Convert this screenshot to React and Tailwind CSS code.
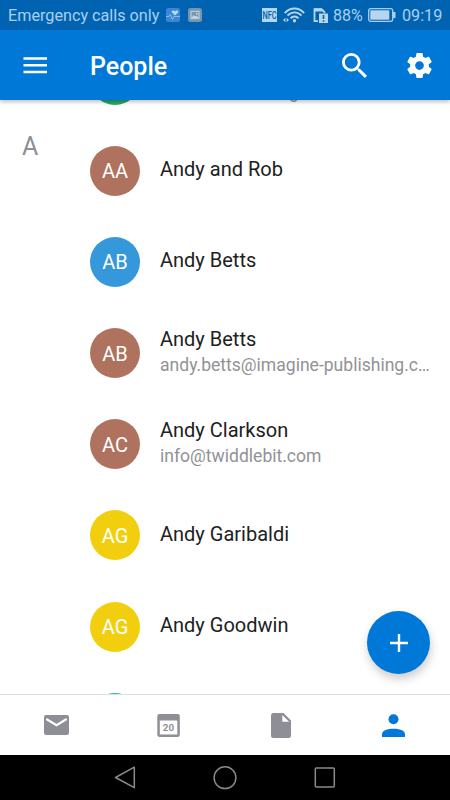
import { useState } from "react"

const CONTACTS = [
  { id: 1, initials: "",   name: "",               email: "service.marketing",                 color: "bg-[#2aa866]" },
  { id: 2, initials: "AA", name: "Andy and Rob",   color: "bg-[#ae725e]", section: "A" },
  { id: 3, initials: "AB", name: "Andy Betts",     color: "bg-[#3498db]" },
  { id: 4, initials: "AB", name: "Andy Betts",     email: "andy.betts@imagine-publishing.co.uk", color: "bg-[#ae725e]" },
  { id: 5, initials: "AC", name: "Andy Clarkson",  email: "info@twiddlebit.com",               color: "bg-[#ae725e]" },
  { id: 6, initials: "AG", name: "Andy Garibaldi", color: "bg-[#f1cf0f]" },
  { id: 7, initials: "AG", name: "Andy Goodwin",   color: "bg-[#f1cf0f]" },
  { id: 8, initials: "",   name: "",               color: "bg-[#2fbd78]" },
]

const TABS = [
  { id: "mail",     label: "Mail",     Icon: MailIcon },
  { id: "calendar", label: "Calendar", Icon: CalendarIcon },
  { id: "files",    label: "Files",    Icon: FileIcon },
  { id: "people",   label: "People",   Icon: PersonIcon },
]

export default function App() {
  const [tab, setTab] = useState("people")

  return (
    <div className="flex flex-col w-[450px] h-[800px] overflow-hidden bg-white font-['Roboto','Liberation_Sans',sans-serif]">
      <StatusBar />
      <AppBar />

      <main className="relative flex-1 min-h-0">
        <ContactList />
        <button
          aria-label="Add contact"
          className="absolute left-[367px] top-[511px] w-[63px] h-[63px] rounded-full bg-[#0078d7] flex items-center justify-center shadow-[1px_5px_10px_rgba(0,0,0,0.2)]"
        >
          <svg viewBox="0 0 18 18" className="w-[18px] h-[18px]" stroke="#fff" strokeWidth="2.4">
            <path d="M9 0v18M0 9h18" />
          </svg>
        </button>
      </main>

      {/* Bottom tabs */}
      <nav className="grid grid-cols-4 h-[61px] shrink-0 border-t border-[#dedede] bg-white">
        {TABS.map(({ id, label, Icon }) => (
          <button
            key={id}
            aria-label={label}
            onClick={() => setTab(id)}
            className={`flex items-center justify-center ${tab === id ? "text-[#0078d7]" : "text-[#8e8e96]"}`}
          >
            <Icon />
          </button>
        ))}
      </nav>

      <SystemNav />
    </div>
  )
}

function StatusBar() {
  return (
    <header className="flex items-center h-[30px] shrink-0 pl-2 pr-2 bg-[#0063b1] text-[#a9cff0] text-[16.500px] leading-[30px]">
      <span className="pt-[2px] w-[158px] shrink-0 whitespace-nowrap text-[16.200px]">Emergency calls only</span>

      {/* Notifications */}
      <svg viewBox="0 0 14 14" className="w-[14px] h-[14px] shrink-0">
        <rect width="14" height="14" rx="2.5" fill="#3c87d3" />
        <path d="M9 7.400 5.800 4.300C5 2.700 7.700 1.600 9 3.400c1.300-1.800 4-.7 3.200.9z" fill="#b8dcf6" />
        <path d="M0 8.500h3l1.300-2 2.200 5 1.500-3h6" fill="none" stroke="#9bc8ee" strokeWidth=".8" />
      </svg>
      <svg viewBox="0 0 14 14" className="w-[14px] h-[14px] ml-2 shrink-0">
        <rect width="14" height="14" rx="2.5" fill="#7596ae" />
        <rect x="3" y="3.300" width="8" height="7.400" fill="none" stroke="#c7d9e5" />
        <path d="m3.500 10 2.300-3 1.500 1.500 1-1L10.500 10zM8 5h1.500v1.500H8z" fill="#c7d9e5" />
      </svg>

      <div className="flex-1" />

      {/* Radios */}
      <div className="flex items-center justify-center w-[15px] h-[14px] shrink-0 bg-[#b5d5f0] text-[#0063b1]">
        <span className="text-[9px] leading-[14px] font-medium scale-x-[.82] scale-y-[1.3]">NFC</span>
      </div>
      <svg viewBox="0 0 22 16" className="w-[22px] h-[16px] ml-[6px] shrink-0" fill="none" stroke="#b5d5f0" strokeWidth="1.900">
        <path d="M1.700 6.200c5.500-6.300 14-6.300 19.500 0M4.500 8.700c4-4.500 10-4.500 14 0M7.500 11.300c2.300-2.500 5.700-2.500 8 0" />
        <circle cx="11.500" cy="13.700" r="1.700" fill="#b5d5f0" stroke="none" />
        <path d="m0 13 2.400-2.300v4.600zM6 13l-2.400-2.300v4.600z" fill="#b5d5f0" stroke="none" />
      </svg>
      <svg viewBox="0 0 15 16" className="w-[15px] h-[16px] ml-2 shrink-0">
        <path d="M5 14.200H1.500v-12h7l3 3V6" fill="none" stroke="#b5d5f0" strokeWidth="1.800" />
        <path d="M1 1.500h7.800l3.200 3H1z" fill="#b5d5f0" />
        <path d="M6 6.500h9V16H6z" fill="#b5d5f0" />
        <path d="M10.500 8v4M10.500 13.200v1.600" stroke="#0063b1" strokeWidth="1.600" />
      </svg>
      <span className="pt-[2px] ml-[5px] w-[30px] shrink-0 whitespace-nowrap text-[16px]">88%</span>
      <svg viewBox="0 0 28 14" className="w-[28px] h-[14px] ml-[5px] shrink-0">
        <rect x=".7" y=".7" width="24" height="12.600" rx="2" fill="none" stroke="#a9cff0" strokeWidth="1.300" />
        <rect x="2.300" y="2.300" width="19" height="9.400" fill="#b5d5f0" />
        <path d="M25 4h2.500v6H25z" fill="#a9cff0" />
      </svg>
      <span className="pt-[2px] ml-[6px] w-[40px] shrink-0 whitespace-nowrap text-[16.200px]">09:19</span>
    </header>
  )
}

function AppBar() {
  return (
    <div className="relative z-10 flex items-center h-[70px] shrink-0 pl-[23px] pr-[18px] bg-[#0078d7] text-white shadow-[0_2px_4px_rgba(0,0,0,0.25)]">
      <button aria-label="Menu" className="mr-[43px]">
        <svg viewBox="0 0 24 17" className="w-[24px] h-[17px]" stroke="currentColor" strokeWidth="2.400">
          <path d="M.5 1.500h23.500M.5 8.300h23.500M.5 15h23.500" />
        </svg>
      </button>
      <h1 className="pt-[3px] text-[25px] leading-[30px] font-medium">People</h1>
      <div className="flex-1" />
      <button aria-label="Search">
        <svg viewBox="3 3 17.490 17.490" className="w-[25px] h-[25px]" fill="currentColor">
          <path d="M15.500 14h-.79l-.28-.27A6.471 6.471 0 0 0 16 9.500 6.500 6.500 0 1 0 9.500 16c1.610 0 3.090-.59 4.230-1.570l.27.28v.79l5 4.990L20.490 19l-4.990-5zm-6 0C7.010 14 5 11.990 5 9.500S7.010 5 9.500 5 14 7.010 14 9.500 11.990 14 9.500 14z" />
        </svg>
      </button>
      <button aria-label="Settings" className="ml-[40px]">
        <svg viewBox="2 2 20 20" className="w-[25px] h-[25px]" fill="currentColor">
          <path d="M19.430 12.980c.04-.32.07-.64.07-.98s-.03-.66-.07-.98l2.110-1.650c.19-.15.24-.42.12-.64l-2-3.460c-.12-.22-.39-.3-.61-.22l-2.490 1c-.52-.4-1.080-.73-1.690-.98l-.38-2.650C14.460 2.180 14.250 2 14 2h-4c-.25 0-.46.18-.49.42l-.38 2.650c-.61.25-1.170.59-1.690.98l-2.490-1c-.23-.09-.49 0-.61.22l-2 3.460c-.13.22-.07.49.12.64l2.110 1.650c-.04.32-.07.65-.07.98s.03.66.07.98l-2.110 1.650c-.19.15-.24.42-.12.64l2 3.460c.12.22.39.3.61.22l2.490-1c.52.4 1.080.73 1.690.98l.38 2.650c.03.24.24.42.49.42h4c.25 0 .46-.18.49-.42l.38-2.650c.61-.25 1.170-.59 1.690-.98l2.490 1c.23.09.49 0 .61-.22l2-3.460c.12-.22.07-.49-.12-.64l-2.110-1.650zM12 15.500c-1.930 0-3.500-1.570-3.500-3.500s1.570-3.500 3.500-3.500 3.500 1.570 3.500 3.500-1.570 3.500-3.500 3.500z" />
        </svg>
      </button>
    </div>
  )
}

// The list is scrolled, so the first and last rows are cut by the bars
function ContactList() {
  return (
    <div className="h-full overflow-hidden">
      <ul className="-mt-[66.100px]">
        {CONTACTS.map(contact => (
          <li key={contact.id} className="flex items-center h-[91.200px] pr-5">
            <div className="w-[90px] pl-[22px] pb-[47px] text-[25px] leading-[30px] text-[#8e8e93]">
              {contact.section}
            </div>
            <div className={`flex items-center justify-center w-[50px] h-[50px] shrink-0 rounded-full pt-px text-white text-[20px] ${contact.color}`}>
              {contact.initials}
            </div>
            <div className={`flex-1 min-w-0 ml-5 ${contact.email ? "-mt-px" : "-mt-[3px]"}`}>
              <p className="h-[26px] text-[20px] leading-[26px] text-[#212121] truncate">{contact.name}</p>
              {contact.email && (
                <p className="text-[17.560px] leading-[27px] text-[#929296] truncate">{contact.email}</p>
              )}
            </div>
          </li>
        ))}
      </ul>
    </div>
  )
}

function SystemNav() {
  return (
    <footer className="flex items-center justify-center h-[45px] shrink-0 bg-black text-[#8a8a8a]">
      <button aria-label="Back" className="flex justify-center w-[100px]">
        <svg viewBox="0 0 22 24" className="w-[22px] h-[24px]" fill="none" stroke="currentColor" strokeWidth="1.500" strokeLinejoin="round">
          <path d="M20.300 1.200v20.500L1.500 11.500z" />
        </svg>
      </button>
      <button aria-label="Home" className="flex justify-center w-[100px]">
        <svg viewBox="0 0 24 24" className="w-[24px] h-[24px]" fill="none" stroke="currentColor" strokeWidth="1.500">
          <circle cx="12" cy="11.700" r="10.900" />
        </svg>
      </button>
      <button aria-label="Recent apps" className="flex justify-center w-[100px]">
        <svg viewBox="0 0 22 22" className="w-[22px] h-[22px]" fill="none" stroke="currentColor" strokeWidth="1.500">
          <rect x="1.300" y="1" width="19" height="19" rx="1" />
        </svg>
      </button>
    </footer>
  )
}

function MailIcon() {
  return (
    <svg viewBox="0 0 25 20" className="w-[25px] h-[20px]">
      <rect width="25" height="20" rx="2.200" fill="currentColor" />
      <path d="m2.300 4 10.200 6.300L22.700 4" fill="none" stroke="#fff" strokeWidth="2.200" />
    </svg>
  )
}

function CalendarIcon() {
  return (
    <svg viewBox="0 0 23 23" className="w-[23px] h-[23px]">
      <path fillRule="evenodd" fill="currentColor" d="M2.500 0h18A2.300 2.300 0 0 1 22.800 2.500v18A2.300 2.300 0 0 1 20.500 23h-18A2.300 2.300 0 0 1 .3 20.500v-18A2.300 2.300 0 0 1 2.500 0zM2.800 6.500v14h17.500v-14z" />
      <text x="11.600" y="17" textAnchor="middle" fontSize="9.800" fontWeight="700" letterSpacing=".3" fill="currentColor">20</text>
    </svg>
  )
}

function FileIcon() {
  return (
    <svg viewBox="0 0 20 25" className="w-[20px] h-[25px]">
      <path fillRule="evenodd" fill="currentColor" d="M2.500 0H12.500L20 7.500v15a2.500 2.500 0 0 1-2.500 2.500h-15A2.500 2.500 0 0 1 0 22.500v-20A2.500 2.500 0 0 1 2.500 0zM11.300 2v6.800h6.900z" />
    </svg>
  )
}

function PersonIcon() {
  return (
    <svg viewBox="0 0 23 23" className="w-[23px] h-[23px]" fill="currentColor">
      <circle cx="11.500" cy="5.300" r="5" />
      <path d="M0 23v-2.800c0-7.200 23-7.200 23 0V23z" />
    </svg>
  )
}
